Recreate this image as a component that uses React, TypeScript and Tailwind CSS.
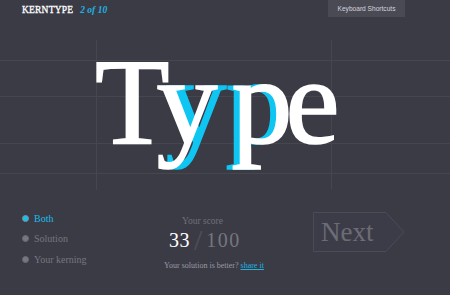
const serif = "font-['Liberation_Serif','Times_New_Roman',serif]";

const Letter = ({ ch, className }: { ch: string; className?: string }) => (
  <span className={`relative inline-block ${className ?? ""}`}>
    <span className="relative text-white">{ch}</span>
  </span>
);

const Radio = ({ label, active }: { label: string; active?: boolean }) => (
  <div className="flex items-center gap-[5px] h-[20.5px]">
    <span
      className={`w-[7px] h-[7px] rounded-full border-[1.5px] ${
        active ? "border-[#8a8a94] bg-[#10c4f0]" : "border-[#6a6a72] bg-[#77777e]"
      }`}
    />
    <span className={active ? "text-[#19bde9]" : "text-[#76767e]"}>{label}</span>
  </div>
);

export default function App() {
  return (
    <div className={`w-[450px] h-[295px] bg-[#3b3b46] overflow-hidden ${serif}`}>
      <header className="flex justify-between h-[17px]">
        <div className="pl-[22px] pt-[4px] flex gap-[7px] text-[9.5px] leading-[12px]">
          <span className="text-white tracking-[0.2px] [-webkit-text-stroke-width:0.3px]">KERNTYPE</span>
          <span className="text-[#1fb3e0] italic font-bold">2 of 10</span>
        </div>
        <button className="mr-[45px] w-[77px] h-[17px] bg-[#4a4a55] text-[6.6px] text-[#d4d4dc] font-['Liberation_Sans',Arial,sans-serif]">
          Keyboard Shortcuts
        </button>
      </header>

      <div className="relative h-[190px]">
        <svg className="absolute inset-0" width="450" height="190">
          <g stroke="#46464f" strokeWidth="1">
            <line x1="0" y1="43.5" x2="450" y2="43.5" />
            <line x1="0" y1="79.5" x2="450" y2="79.5" />
            <line x1="0" y1="126.5" x2="450" y2="126.5" />
            <line x1="0" y1="156.5" x2="450" y2="156.5" />
            <line x1="96.5" y1="23" x2="96.5" y2="173" />
            <line x1="331.5" y1="23" x2="331.5" y2="173" />
          </g>
        </svg>
        <div className="relative flex pl-[95px] pt-[24px] text-[122px] leading-none [-webkit-text-stroke-width:1.6px]">
          <Letter ch="T" />
          <Letter
            ch="y"
            className="ml-[-13px] before:absolute before:top-0 before:left-[9px] before:text-[#0fc6f2] before:content-['y']"
          />
          <Letter
            ch="p"
            className="ml-[14px] before:absolute before:top-0 before:left-[-6px] before:text-[#0fc6f2] before:content-['p']"
          />
          <Letter ch="e" className="ml-[-7px]" />
        </div>
      </div>

      <div className="flex pt-[1px]">
        <div className="pl-[22px] w-[140px] text-[10px]">
          <Radio label="Both" active />
          <Radio label="Solution" />
          <Radio label="Your kerning" />
        </div>
        <div className="w-[130px] pl-[24px] flex flex-col items-start">
          <div className="ml-[18px] text-[9.5px] text-[#6f6f79] mt-[6px]">Your score</div>
          <div className="ml-[5px] flex items-center h-[24px] text-[20px]">
            <span className="text-white tracking-[0.5px]">33</span>
            <span className="text-[30px] text-[#50505a] mx-[4px] font-light leading-none">/</span>
            <span className="text-[#76767f] tracking-[1.5px]">100</span>
          </div>
          <div className="mt-[8px] text-[8px] text-[#9a9aa2] whitespace-nowrap">
            Your solution is better?{" "}
            <a href="#" className="text-[#1fb3e0] underline">
              share it
            </a>
          </div>
        </div>
        <div className="pl-[43px] pt-[4px]">
          <button className="relative w-[92px] h-[40px] text-left">
            <svg className="absolute inset-0" width="92" height="40">
              <polygon
                points="0.5,0.5 73,0.5 91,20 73,39.5 0.5,39.5"
                fill="#3c3c48"
                stroke="#4b4b57"
              />
            </svg>
            <span className="relative pl-[8px] text-[27px] text-[#6c6c76]">Next</span>
          </button>
        </div>
      </div>
    </div>
  );
}
